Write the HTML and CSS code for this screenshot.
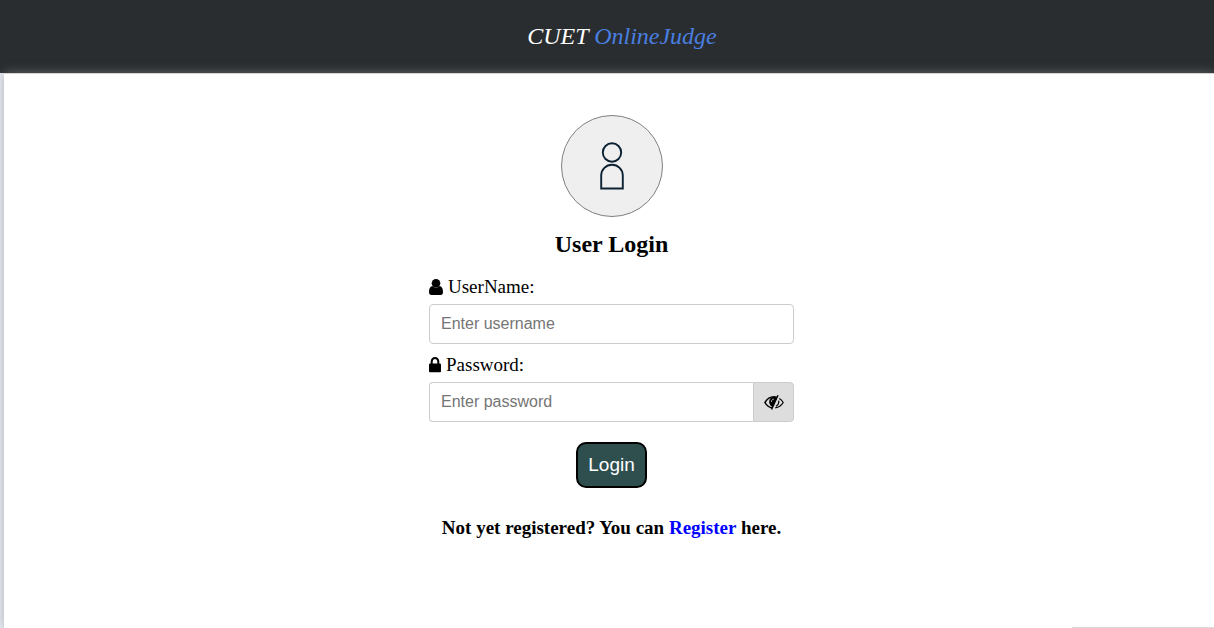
FILE: index.html
```html
<!DOCTYPE html>
<html lang="en">
<head>
<meta charset="utf-8">
<meta name="viewport" content="width=device-width, initial-scale=1">
<title>CUET OnlineJudge - Login</title>
<link rel="stylesheet" href="styles.css">
</head>
<body>
<header class="header">
  <div class="brand"><span>CUET</span> <span class="brand-accent">OnlineJudge</span></div>
</header>
<main class="panel">
  <form class="login">
    <div class="avatar">
      <svg width="100" height="100" viewBox="0 0 100 100" fill="none" stroke="#0c2233" stroke-width="1.9" aria-hidden="true">
        <circle cx="50" cy="36.500" r="9.200"/>
        <path d="M39.200 72.500V59.500a10.800 10.800 0 0 1 21.600 0v13z"/>
      </svg>
    </div>
    <h1 class="title">User Login</h1>
    <label class="label" for="username">
      <svg class="icon" width="14" height="18" viewBox="0 0 14 18" aria-hidden="true">
        <circle cx="7" cy="5.200" r="4.300"/>
        <path d="M3.200 8Q7 11.200 10.800 8C13 8.400 14 11 14 14Q14 17 11.500 17H2.500Q0 17 0 14C0 11 1 8.400 3.200 8z"/>
      </svg>
      UserName:
    </label>
    <input class="field" id="username" type="text" placeholder="Enter username">
    <label class="label" for="password">
      <svg class="icon" width="12" height="18" viewBox="0 0 12 18" aria-hidden="true">
        <path d="M2.700 8.500V5.400a3.300 3.500 0 0 1 6.600 0v3.100" fill="none" stroke="#000" stroke-width="2"/>
        <rect y="7.500" width="12" height="8.700" rx="1"/>
      </svg>
      Password:
    </label>
    <div class="password">
      <input class="field" id="password" type="password" placeholder="Enter password">
      <button class="toggle" type="button" aria-label="Show password">
        <svg width="20" height="18" viewBox="0 0 20 18" fill="none" stroke="#000" stroke-width="1.500" aria-hidden="true">
          <path d="M8 15C5.300 14.300 2.600 12.500 .9 9.500C3 5.900 6.200 3.800 10 3.800c1 0 1.800.1 2.600.4"/>
          <path d="M10 4C6.800 4 5 6.500 5.200 9.300c.2 2.200 1.400 3.900 3.300 4.700L13.200 4.600C12.400 4.200 11.200 4 10 4z" fill="#000" stroke="none"/>
          <path d="M7.300 9c0-1.700 1-2.800 2.600-2.900" stroke="#ddd" stroke-width=".8"/>
          <path d="M14 2.200L7.600 16.500" stroke-width="1.400"/>
          <path d="M15.300 5.400c1.600.9 2.900 2.300 3.900 4.100-1.800 3.100-4.500 5-8 5.300M14.700 7.700c.4 2.500-.6 4.500-2.700 5.600" stroke-width="1.200"/>
        </svg>
      </button>
    </div>
    <button class="submit" type="submit">Login</button>
    <p class="register">Not yet registered? You can <a class="link" href="#register">Register</a> here.</p>
  </form>
  <div class="status-edge"></div>
</main>
</body>
</html>
```

FILE: styles.css
```css
* {
  box-sizing: border-box;
}

body {
  margin: 0;
  min-height: 100vh;
  display: flex;
  flex-direction: column;
  background: #e6ebf5;
  font-family: "Liberation Serif", "Times New Roman", serif;
  font-size: 19px;
  color: #000;
  overflow-x: hidden;
}

.header {
  display: flex;
  justify-content: center;
  padding: 20px 0 21px 30px;
  background: #292d30;
}

.brand {
  font-size: 24px;
  line-height: 32px;
  font-style: italic;
  color: #fff;
  white-space: nowrap;
}

.brand-accent {
  color: #4a7fe0;
}

.panel {
  position: relative;
  flex: 1;
  margin-left: 4px;
  padding: 41px 0 24px 5px;
  border-top: 1px solid #d5d3d2;
  background: #fff;
  box-shadow: 0 0 10px rgba(140, 136, 135, 0.6);
}

.login {
  width: 365px;
  max-width: 100%;
  margin: 0 auto;
  display: flex;
  flex-direction: column;
}

.avatar {
  align-self: center;
  width: 102px;
  height: 102px;
  border: 1px solid #808080;
  border-radius: 50%;
  background: #efefef;
}

.avatar svg {
  display: block;
}

.title {
  margin: 13px 0 15px;
  font-size: 24px;
  line-height: 28px;
  text-align: center;
}

.label {
  display: flex;
  align-items: center;
  gap: 5px;
  height: 27px;
  margin-bottom: 4px;
}

.field {
  width: 100%;
  height: 40px;
  padding: 0 11px;
  border: 1px solid #ccc;
  border-radius: 4px;
  background: #fff;
  font-family: "Liberation Sans", Arial, sans-serif;
  font-size: 16px;
}

.field::placeholder {
  color: #757575;
}

.field + .label {
  margin-top: 7px;
}

.password {
  display: flex;
}

.password .field {
  flex: 1;
  min-width: 0;
  border-right: 0;
  border-radius: 4px 0 0 4px;
}

.toggle {
  display: flex;
  align-items: center;
  justify-content: center;
  width: 41px;
  height: 40px;
  padding: 0;
  border: 1px solid #ccc;
  border-radius: 0 4px 4px 0;
  background: #ddd;
  cursor: pointer;
}

.submit {
  align-self: center;
  height: 46px;
  margin-top: 20px;
  padding: 0 10px;
  border: 2px solid #000;
  border-radius: 10px;
  background: #2f4f4f;
  color: #fff;
  font-family: "Liberation Sans", Arial, sans-serif;
  font-size: 19px;
  cursor: pointer;
}

.register {
  margin: 29px 0 0;
  line-height: 22px;
  font-weight: bold;
  text-align: center;
}

.link {
  color: #00f;
  text-decoration: none;
}

.status-edge {
  position: absolute;
  right: 0;
  bottom: 0;
  width: 142px;
  border-top: 1px solid #dadad8;
}
```
